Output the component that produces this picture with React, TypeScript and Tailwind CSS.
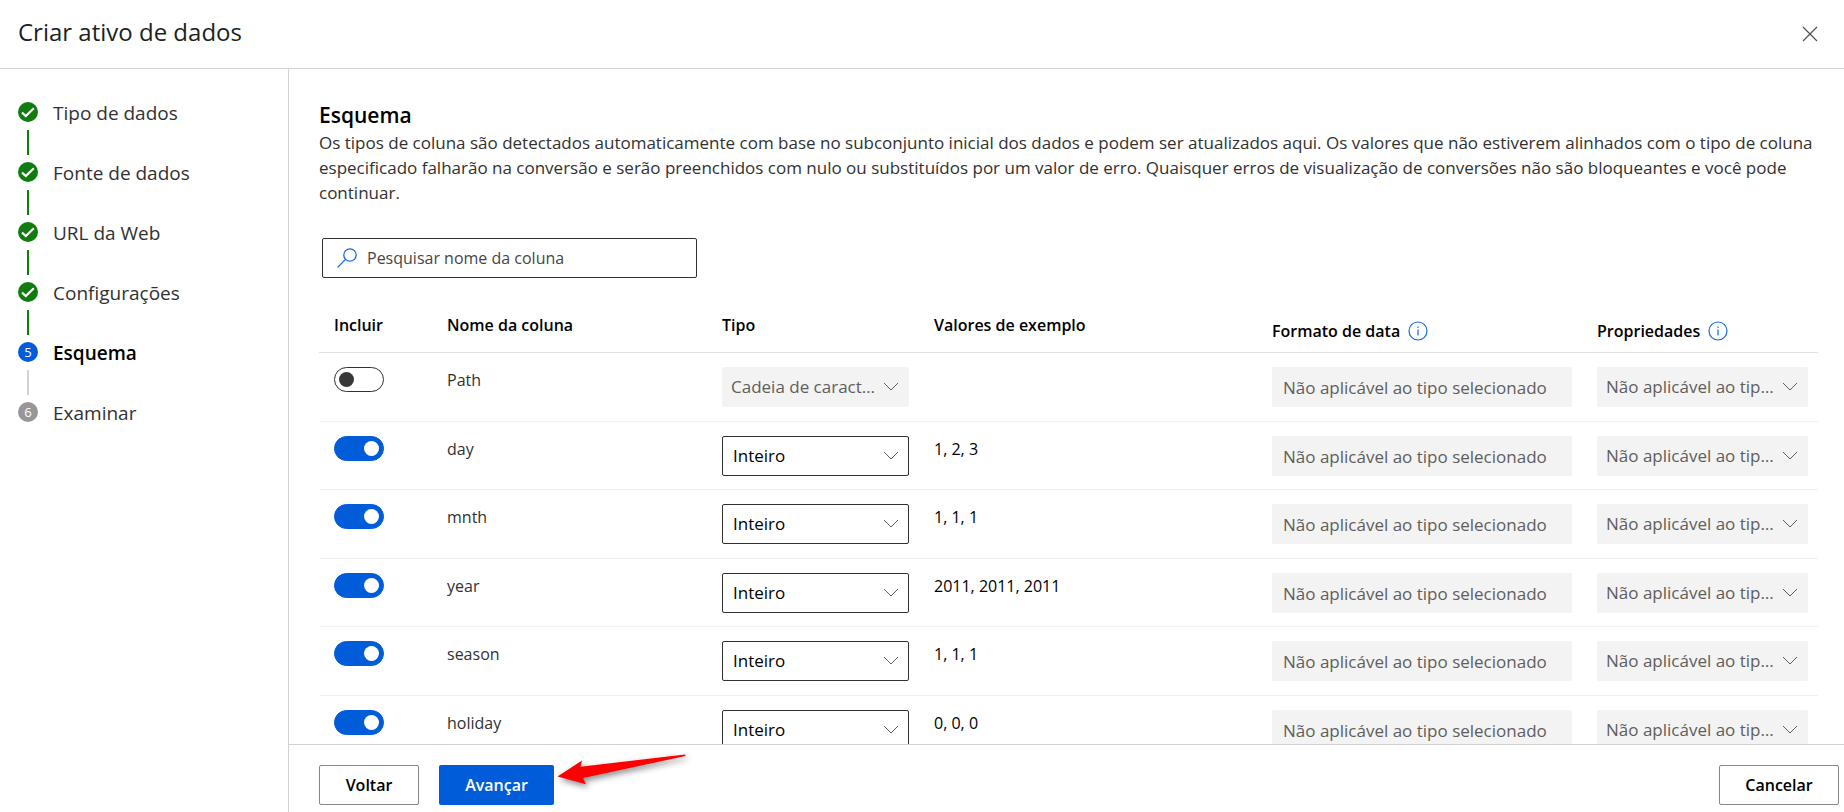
import React, { useState } from "react";

type Step = { label: string; state: "done" | "current" | "pending" };

const steps: Step[] = [
  { label: "Tipo de dados", state: "done" },
  { label: "Fonte de dados", state: "done" },
  { label: "URL da Web", state: "done" },
  { label: "Configurações", state: "done" },
  { label: "Esquema", state: "current" },
  { label: "Examinar", state: "pending" },
];

type Column = { name: string; type: string; sample: string; included: boolean };

const columns: Column[] = [
  { name: "Path", type: "Cadeia de caracteres", sample: "", included: false },
  { name: "day", type: "Inteiro", sample: "1, 2, 3", included: true },
  { name: "mnth", type: "Inteiro", sample: "1, 1, 1", included: true },
  { name: "year", type: "Inteiro", sample: "2011, 2011, 2011", included: true },
  { name: "season", type: "Inteiro", sample: "1, 1, 1", included: true },
  { name: "holiday", type: "Inteiro", sample: "0, 0, 0", included: true },
];

const NOT_APPLICABLE = "Não aplicável ao tipo selecionado";

const markerColor = {
  done: "bg-[#107c10]",
  current: "bg-[#015cda]",
  pending: "bg-[#979797]",
};

function StepMarker({ state, index }: { state: Step["state"]; index: number }) {
  return (
    <span
      className={`flex size-5 shrink-0 items-center justify-center rounded-full text-[13px] leading-5 font-medium text-white ${markerColor[state]}`}
    >
      {state === "done" ? (
        <svg viewBox="0 0 20 20" className="size-5" fill="none" stroke="currentColor" strokeWidth="2.2" aria-hidden="true">
          <path d="M4 10.6 L7.8 14 L15.8 6.2" />
        </svg>
      ) : (
        index + 1
      )}
    </span>
  );
}

function Chevron() {
  return (
    <svg
      viewBox="0 0 16 16"
      className="pointer-events-none col-start-1 row-start-1 mr-2.5 size-4 self-center justify-self-end text-[#605e5c]"
      fill="none"
      stroke="currentColor"
      strokeWidth="1"
      aria-hidden="true"
    >
      <path d="M1 4 L8 11 L15 4" />
    </svg>
  );
}

function Select({ label, value, disabled }: { label: string; value: string; disabled?: boolean }) {
  return (
    <div className="grid">
      <select
        aria-label={label}
        disabled={disabled}
        defaultValue={value}
        className="col-start-1 row-start-1 h-10 w-full appearance-none truncate rounded-xs border border-[#323130] bg-white pr-7 pl-2.5 text-[17px] text-black opacity-100 disabled:border-[#f3f3f3] disabled:bg-[#f3f3f3] disabled:pl-2 disabled:text-[#605e5c]"
      >
        <option>{value}</option>
      </select>
      <Chevron />
    </div>
  );
}

function Toggle({ label, initial }: { label: string; initial: boolean }) {
  const [on, setOn] = useState(initial);
  return (
    <button
      type="button"
      role="switch"
      aria-checked={on}
      aria-label={label}
      onClick={() => setOn(!on)}
      className={`flex h-[25px] w-[50px] items-center rounded-full border px-1 ${
        on ? "justify-end border-[#015cda] bg-[#015cda]" : "justify-start border-[#323130] bg-white"
      }`}
    >
      <span className={`size-[15px] rounded-full ${on ? "bg-white" : "bg-[#383838]"}`} />
    </button>
  );
}

function InfoButton({ label }: { label: string }) {
  return (
    <button type="button" aria-label={label} className="text-[#1a6be0]">
      <svg viewBox="0 0 20 20" className="size-5" fill="none" stroke="currentColor" strokeWidth="1.2" aria-hidden="true">
        <circle cx="10" cy="10" r="9" />
        <path d="M10 8.4 V14.4 M10 5.6 V7" />
      </svg>
    </button>
  );
}

function AnnotationArrow() {
  return (
    <svg
      viewBox="0 0 136 40"
      className="pointer-events-none absolute top-1/2 left-full h-10 w-[136px] -translate-y-[35px] drop-shadow-[2px_3px_3px_rgba(0,0,0,0.45)]"
      aria-hidden="true"
    >
      <path d="M3.5 26.5 L28 10.5 L26.5 16.8 L131 4.5 L131.5 6 L29 28 L32 34.2 Z" fill="#ff0000" />
    </svg>
  );
}

export default function App() {
  return (
    <div className="flex h-screen flex-col overflow-hidden bg-white font-['Open_Sans','Noto_Sans',sans-serif] text-base text-[#323130]">
      <header className="flex h-[69px] shrink-0 items-center justify-between border-b border-[#d2d2d2] pr-6 pb-1 pl-[18px]">
        <h1 className="text-2xl leading-8 text-[#201f1e]">Criar ativo de dados</h1>
        <button type="button" aria-label="Fechar" className="p-0.5 text-[#505050]">
          <svg viewBox="0 0 16 16" className="mt-1 size-4" fill="none" stroke="currentColor" strokeWidth="1.2" aria-hidden="true">
            <path d="M1 1 L15 15 M15 1 L1 15" />
          </svg>
        </button>
      </header>

      <div className="flex min-h-0 flex-1">
        <nav aria-label="Etapas" className="w-[289px] shrink-0 border-r border-[#d2d2d2] pt-[33px] pl-[18px]">
          <ol>
            {steps.map((step, i) => (
              <li key={step.label} className="flex h-[60px] gap-[15px]">
                <div className="flex w-5 flex-col items-center gap-2">
                  <StepMarker state={step.state} index={i} />
                  {i < steps.length - 1 && (
                    <span className={`h-[25px] w-0.5 ${step.state === "done" ? "bg-[#107c10]" : "bg-[#d2d2d2]"}`} />
                  )}
                </div>
                <a
                  href="#"
                  aria-current={step.state === "current" ? "step" : undefined}
                  className={`text-[19px] leading-[22px] ${step.state === "current" ? "font-semibold text-black" : ""}`}
                >
                  {step.label}
                </a>
              </li>
            ))}
          </ol>
        </nav>

        <div className="flex min-w-0 flex-1 flex-col">
          <main className="min-h-0 flex-1 overflow-y-auto pt-8 pr-[26px] pl-[30px] [scrollbar-width:none]">
            <h2 className="text-[21px] leading-7 font-semibold text-black">Esquema</h2>
            <p className="mt-px text-[17px] leading-[25px]">
              Os tipos de coluna são detectados automaticamente com base no subconjunto inicial dos dados e podem ser
              atualizados aqui. Os valores que não estiverem alinhados com o tipo de coluna especificado falharão na
              conversão e serão preenchidos com nulo ou substituídos por um valor de erro. Quaisquer erros de
              visualização de conversões não são bloqueantes e você pode continuar.
            </p>

            <label className="mt-[33px] ml-[3px] flex h-10 w-[375px] items-center gap-2.5 rounded-xs border border-[#323130] pl-[14px]">
              <svg viewBox="0 0 20 20" className="size-5 shrink-0 text-[#1a6be0]" fill="none" stroke="currentColor" strokeWidth="1.3" aria-hidden="true">
                <circle cx="13" cy="7" r="6.2" />
                <path d="M8.6 11.4 L0.6 19.4" />
              </svg>
              <input
                type="text"
                aria-label="Pesquisar nome da coluna"
                placeholder="Pesquisar nome da coluna"
                className="min-w-0 flex-1 outline-none placeholder:text-[#484644]"
              />
            </label>

            <table className="mt-[11px] w-full table-fixed border-collapse">
              <colgroup>
                <col className="w-[113px]" />
                <col className="w-[275px]" />
                <col className="w-[212px]" />
                <col />
                <col className="w-[325px]" />
                <col className="w-[236px]" />
              </colgroup>
              <thead>
                <tr className="h-[63px] border-b border-[#e1e1e1] text-left align-top leading-6 text-black [&>th]:pt-6 [&>th]:pl-[15px] [&>th]:font-semibold">
                  <th scope="col">Incluir</th>
                  <th scope="col">Nome da coluna</th>
                  <th scope="col">Tipo</th>
                  <th scope="col">Valores de exemplo</th>
                  <th scope="col">
                    <span className="flex items-center gap-2 pt-1.5">
                      Formato de data
                      <InfoButton label="Sobre o formato de data" />
                    </span>
                  </th>
                  <th scope="col">
                    <span className="flex items-center gap-2 pt-1.5">
                      Propriedades
                      <InfoButton label="Sobre as propriedades" />
                    </span>
                  </th>
                </tr>
              </thead>
              <tbody>
                {columns.map((col) => (
                  <tr
                    key={col.name}
                    className="border-b border-[#f0f0f0] align-top odd:h-[69px] even:h-[68px] [&>td]:pt-3.5 [&>td]:pr-2.5 [&>td]:pb-0 [&>td]:pl-[15px]"
                  >
                    <td>
                      <Toggle label={`Incluir ${col.name}`} initial={col.included} />
                    </td>
                    <td className="leading-[27px]">{col.name}</td>
                    <td>
                      <Select label={`Tipo de ${col.name}`} value={col.type} disabled={!col.included} />
                    </td>
                    <td className="leading-[27px] text-black">{col.sample}</td>
                    <td>
                      <input
                        type="text"
                        disabled
                        aria-label={`Formato de data de ${col.name}`}
                        placeholder={NOT_APPLICABLE}
                        className="block h-10 w-full rounded-xs bg-[#f3f3f3] px-[11px] pt-0.5 text-[17px] placeholder:text-[#605e5c]"
                      />
                    </td>
                    <td>
                      <Select label={`Propriedades de ${col.name}`} value={NOT_APPLICABLE} disabled />
                    </td>
                  </tr>
                ))}
              </tbody>
            </table>
          </main>

          <footer className="flex h-[68px] shrink-0 items-start justify-between border-t border-[#d2d2d2] pt-5 pr-[5px] pl-[30px] font-semibold text-black">
            <div className="flex gap-5">
              <button type="button" className="h-10 w-[100px] rounded-xs border border-[#8a8886] bg-white">
                Voltar
              </button>
              <div className="relative">
                <button type="button" className="h-10 w-[115px] rounded-xs bg-[#015cda] text-white">
                  Avançar
                </button>
                <AnnotationArrow />
              </div>
            </div>
            <button type="button" className="h-10 w-[120px] rounded-xs border border-[#8a8886] bg-white">
              Cancelar
            </button>
          </footer>
        </div>
      </div>
    </div>
  );
}
